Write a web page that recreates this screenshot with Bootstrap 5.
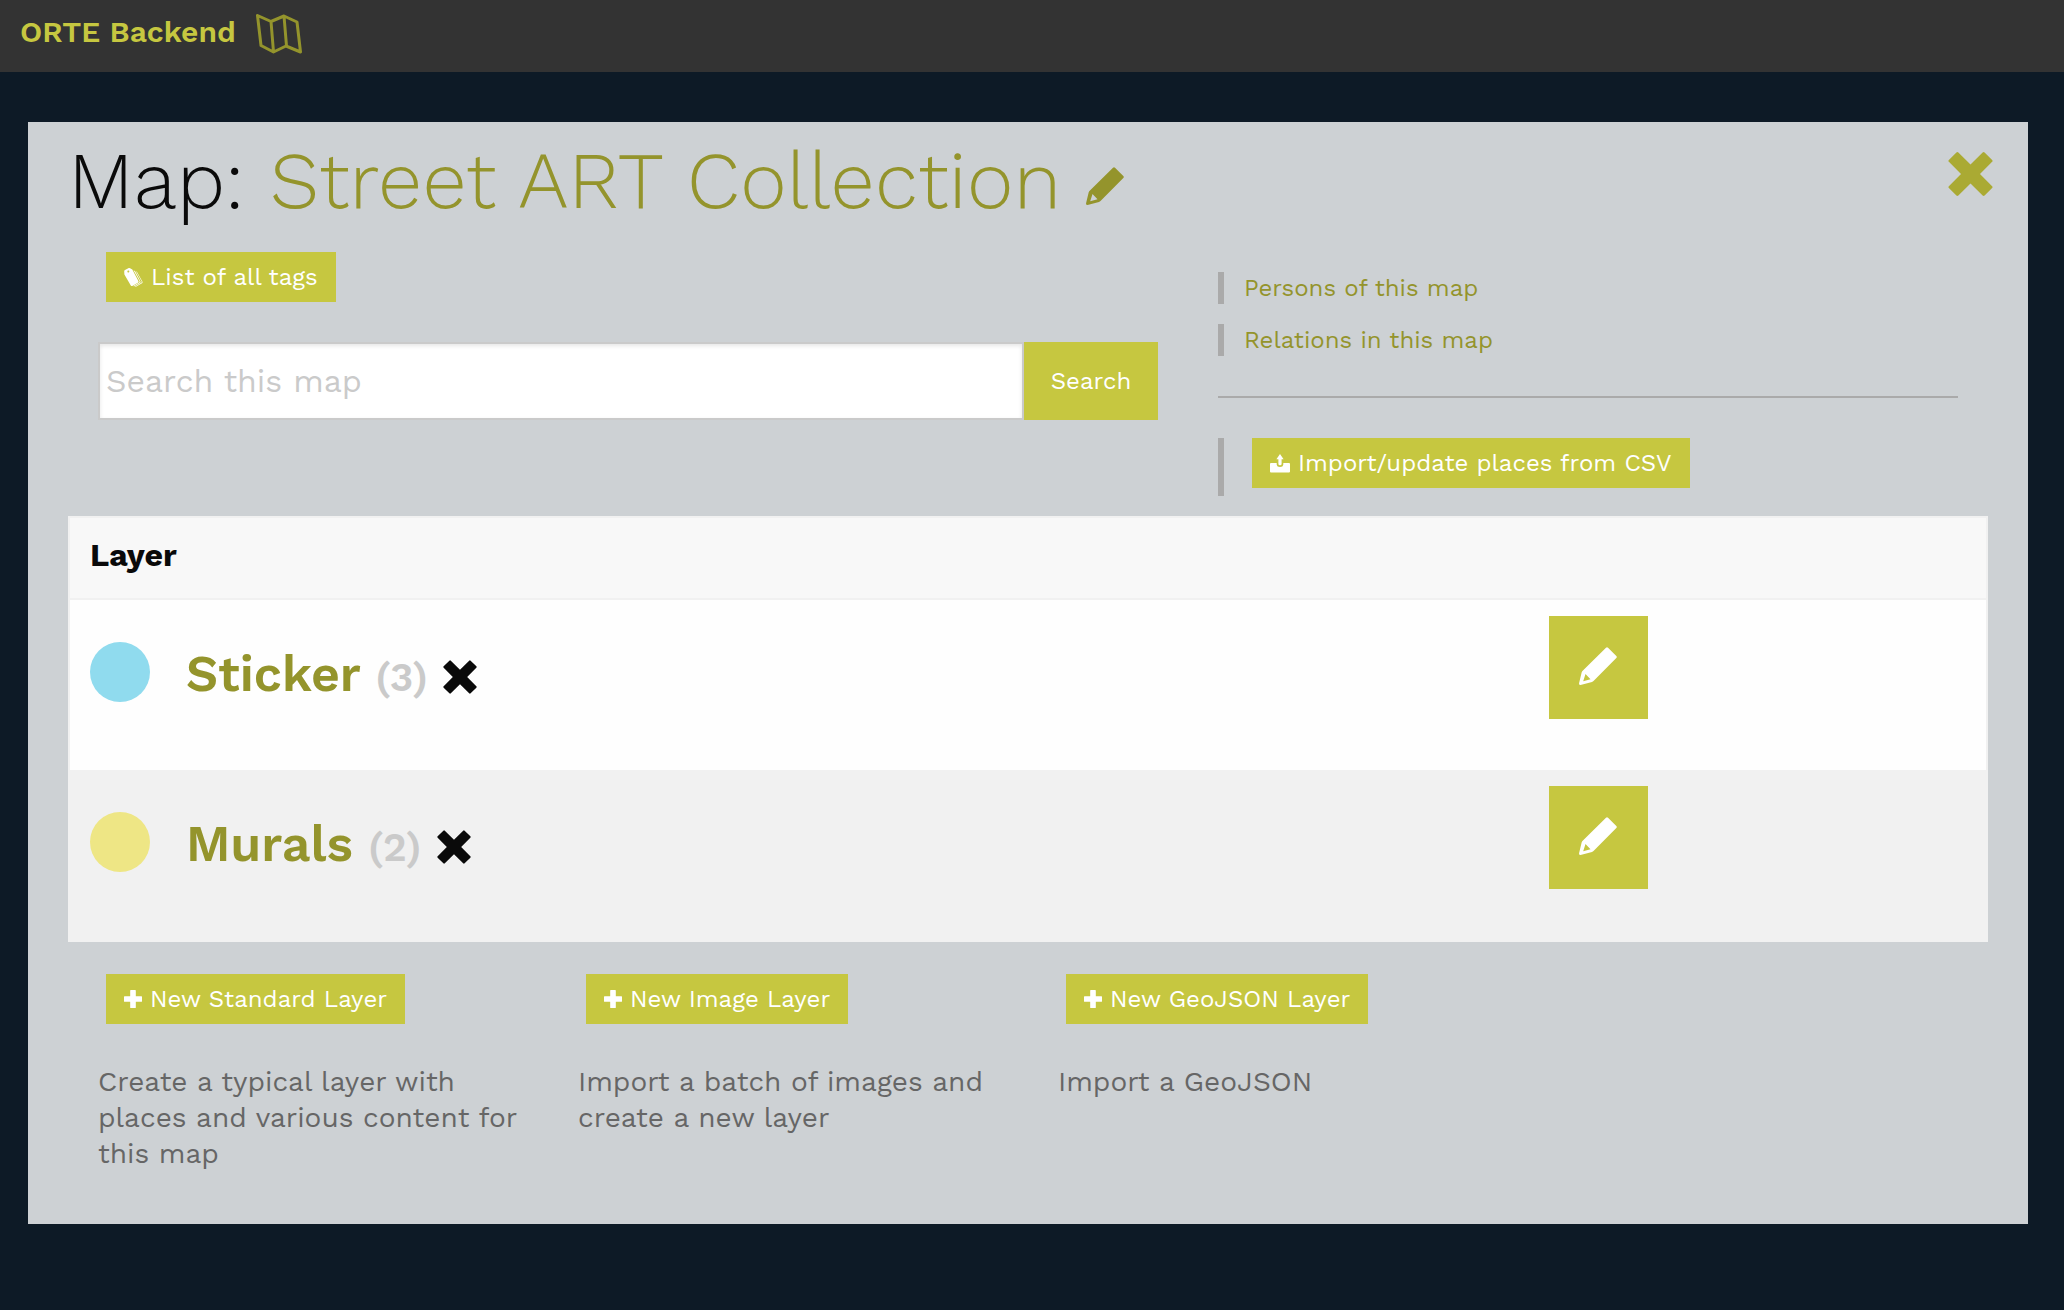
<!DOCTYPE html>
<html lang="en">
<head>
<meta charset="utf-8">
<meta name="viewport" content="width=device-width, initial-scale=1">
<title>ORTE Backend</title>
<link href="https://cdn.jsdelivr.net/npm/bootstrap@5.3.0/dist/css/bootstrap.min.css" rel="stylesheet">
<style>
  :root { --lime: #c6c740; --olive: #94942c; --ink: #0a0a0a; }
  body { background: #0d1a26; color: var(--ink); font-family: "Work Sans", Inter, "Liberation Sans", sans-serif; font-size: 24px; line-height: 32px; }
  a { color: var(--olive); text-decoration: none; }
  a:hover { color: #7d7d22; }
  svg { fill: currentColor; display: block; flex: none; }
  .topbar { background: #333; min-height: 72px; padding: 0 20px; }
  .topbar .navbar-brand { color: var(--lime); font-size: 30px; font-weight: 600; line-height: 32px; margin-right: 20px; padding: 0 0 8px; }
  .map-icon { fill: none; stroke: currentColor; stroke-width: 3; stroke-linejoin: round; }
  .panel { background: #cdd1d4; margin: 50px 36px 86px 28px; padding-bottom: 52px; }
  .panel-head { padding: 0 35px 12px 40px; }
  .panel-head h1 { font-size: 80px; font-weight: 300; line-height: 118px; margin: 0; }
  .panel-head h1 svg { display: inline-block; vertical-align: 3px; }
  .close-link { color: #aaaa33; margin-top: 29px; }
  .panel-body { padding: 0 40px; }
  .panel-body > .row { --bs-gutter-x: 60px; margin-left: 0; margin-right: 0; }
  .btn-lime { --bs-btn-color: #fff; --bs-btn-bg: var(--lime); --bs-btn-hover-color: #fff; --bs-btn-hover-bg: #aaaa33; --bs-btn-active-color: #fff; --bs-btn-active-bg: #94942c; --bs-btn-border-width: 0; --bs-btn-border-radius: 0; --bs-btn-font-size: 24px; --bs-btn-line-height: 26px; --bs-btn-padding-y: 12px; --bs-btn-padding-x: 18px; }
  .btn-tool { display: inline-flex; align-items: center; gap: 8px; margin-left: 8px; }
  .search-row { margin-top: 40px; }
  .search-row .form-control { border: 2px solid #cacaca; border-radius: 0; box-shadow: inset 0 2px 4px rgba(10,10,10,.1); font-size: 32px; height: 78px; padding: 0 6px; color: var(--ink); }
  .search-row .form-control::placeholder { color: #cacaca; opacity: 1; }
  .search-row .btn { flex: none; width: 134px; }
  .side { margin-top: 20px; margin-bottom: 20px; }
  .side-item { border-left: 6px solid #aaa; padding-left: 20px; }
  .side-item + .side-item { margin-top: 20px; }
  .side-item .btn { margin-bottom: 8px; }
  .side hr { border-top: 2px solid #aaa; opacity: 1; margin: 40px 0; }
  .layers { margin: 0; border: 2px solid #f1f1f1; border-collapse: separate; border-spacing: 0; --bs-table-bg: #fefefe; --bs-table-color: var(--ink); }
  .layers > :not(caption) > * > * { border: 0; padding: 0 20px; box-shadow: none; }
  .layers > thead > tr > th { background: #f8f8f8; border-bottom: 2px solid #f1f1f1; font-size: 32px; font-weight: 700; height: 82px; padding-bottom: 6px; vertical-align: middle; }
  .layers > tbody > tr > td { height: 170px; padding-top: 16px; vertical-align: top; }
  .layers > tbody > tr:nth-child(even) > td { background: #f1f1f1; }
  .col-edit { width: 457px; }
  .layer-line { gap: 36px; padding-top: 26px; }
  .dot { width: 60px; height: 60px; border-radius: 50%; }
  .dot-blue { background: #90dbee; }
  .dot-yellow { background: #eee685; }
  .layer-name { font-size: 50px; font-weight: 600; line-height: 64px; margin: 0; }
  .layer-name .tally { color: #cacaca; font-size: 40px; }
  .layer-name svg { display: inline-block; vertical-align: -3px; color: var(--ink); }
  .btn-edit { display: inline-flex; padding: 31px 31px 34px 30px; }
  .actions { margin-top: 32px; }
  .actions p { color: #666; font-size: 28px; line-height: 36px; margin: 40px 0 0; }
</style>
</head>
<body>
<svg class="d-none" aria-hidden="true">
  <symbol id="i-pencil" viewBox="0 0 38 38"><path fill-rule="evenodd" d="M3.2 24.3 27 .7q1-1 2 0l8.300 8.300q1 1 0 2L14.500 34 13 35 1.500 38Q0 38 0 36.500L2.700 25.200ZM6.500 27 4.200 34.200 11.500 32.200Z"/></symbol>
  <symbol id="i-cross" viewBox="0 0 46 46"><path d="M8.600.9q1-1 2 0L23 13.300 35.400.9q1-1 2 0l7.700 7.700q1 1 0 2L32.700 23l12.400 12.400q1 1 0 2l-7.700 7.700q-1 1-2 0L23 32.700 10.600 45.100q-1 1-2 0L.9 37.400q-1-1 0-2L13.300 23 .9 10.600q-1-1 0-2Z"/></symbol>
  <symbol id="i-plus" viewBox="0 0 18 18"><path d="M6.800 0h4.400q.6 0 .6.600v5.600h5.600q.6 0 .6.600v4.400q0 .6-.6.600h-5.600v5.600q0 .6-.6.600H6.800q-.6 0-.6-.6v-5.600H.6q-.6 0-.6-.6V6.800q0-.6.6-.6h5.600V.6q0-.6.600-.6Z"/></symbol>
  <symbol id="i-tags" viewBox="0 0 19 19"><path fill-rule="evenodd" d="M.2 3.400Q.2 2.500 1 2.100L4.800.1Q6 -.1 6.900.7L8.300 1.600 14.500 13.200Q14.700 14.200 13.900 14.800L8.300 18Q7.300 18.300 6.800 17.500L.4 6.500ZM4.600 2.500a1 1 0 1 0 .1 1.900 1 1 0 0 0-.1-1.900Z"/><path d="M9.500 2.200 11 3l5.500 10.400q.2 1-.6 1.500l-6 3.600-.3-.7 5.600-3.400q.7-.5.4-1.200Z M12 3.300l.9.500 5.600 10q.3 1-.5 1.500L11.500 19l-.4-.5 6.200-3.800q.7-.5.400-1.200Z"/></symbol>
  <symbol id="i-upload" viewBox="0 0 20 19"><path d="M10 0l3.600 5.200h-2V10q0 1.200-1.600 1.200T8.400 10V5.200h-2Z"/><path d="M1 9h5.700v1.500Q7 13 10 13t3.300-2.500V9H19q1 0 1 1v7.500q0 1-1 1H1q-1 0-1-1V10Q0 9 1 9Z"/></symbol>
</svg>

<nav class="navbar topbar justify-content-start">
  <a class="navbar-brand" href="#">ORTE Backend</a>
  <a class="pb-1" href="#" aria-label="Maps">
    <svg class="map-icon" width="46" height="40" viewBox="0 0 46 40"><path d="M1.500 1.500 15 7.500 28 2 41 8 44.500 38 30 32 17.500 38 5 31.500ZM15 7.500 17.500 38M28 2 30.500 32"/></svg>
  </a>
</nav>

<main class="panel">
  <header class="panel-head d-flex justify-content-between align-items-start">
    <h1>Map: <a href="#">Street ART Collection <svg width="38" height="38" role="img" aria-label="Edit map"><use href="#i-pencil"/></svg></a></h1>
    <a class="close-link" href="#" aria-label="Close"><svg width="45" height="46"><use href="#i-cross"/></svg></a>
  </header>

  <div class="panel-body">
    <div class="row">
      <div class="col-7">
        <a class="btn btn-lime btn-tool" href="#"><svg width="19" height="19"><use href="#i-tags"/></svg>List of all tags</a>
        <form class="search-row d-flex" role="search">
          <input class="form-control" type="search" placeholder="Search this map" aria-label="Search this map">
          <button class="btn btn-lime" type="submit">Search</button>
        </form>
      </div>
      <div class="col-5">
        <div class="side">
          <div class="side-item"><a href="#">Persons of this map</a></div>
          <div class="side-item"><a href="#">Relations in this map</a></div>
          <hr>
          <div class="side-item"><a class="btn btn-lime btn-tool" href="#"><svg width="20" height="19"><use href="#i-upload"/></svg>Import/update places from CSV</a></div>
        </div>
      </div>
    </div>

    <table class="table layers">
      <thead>
        <tr><th scope="col">Layer</th><th class="col-edit"></th></tr>
      </thead>
      <tbody>
        <tr>
          <td>
            <div class="layer-line d-flex">
              <span class="dot dot-blue"></span>
              <h2 class="layer-name"><a href="#">Sticker</a> <span class="tally">(3)</span> <svg width="34" height="34" role="img" aria-label="Not published"><use href="#i-cross"/></svg></h2>
            </div>
          </td>
          <td><a class="btn btn-lime btn-edit" href="#" aria-label="Edit Sticker"><svg width="38" height="38"><use href="#i-pencil"/></svg></a></td>
        </tr>
        <tr>
          <td>
            <div class="layer-line d-flex">
              <span class="dot dot-yellow"></span>
              <h2 class="layer-name"><a href="#">Murals</a> <span class="tally">(2)</span> <svg width="34" height="34" role="img" aria-label="Not published"><use href="#i-cross"/></svg></h2>
            </div>
          </td>
          <td><a class="btn btn-lime btn-edit" href="#" aria-label="Edit Murals"><svg width="38" height="38"><use href="#i-pencil"/></svg></a></td>
        </tr>
      </tbody>
    </table>

    <div class="row actions">
      <div class="col-3">
        <a class="btn btn-lime btn-tool" href="#"><svg width="18" height="18"><use href="#i-plus"/></svg>New Standard Layer</a>
        <p>Create a typical layer with places and various content for this map</p>
      </div>
      <div class="col-3">
        <a class="btn btn-lime btn-tool" href="#"><svg width="18" height="18"><use href="#i-plus"/></svg>New Image Layer</a>
        <p>Import a batch of images and create a new layer</p>
      </div>
      <div class="col-3">
        <a class="btn btn-lime btn-tool" href="#"><svg width="18" height="18"><use href="#i-plus"/></svg>New GeoJSON Layer</a>
        <p>Import a GeoJSON</p>
      </div>
    </div>
  </div>
</main>
<script src="https://cdn.jsdelivr.net/npm/bootstrap@5.3.0/dist/js/bootstrap.bundle.min.js"></script>
</body>
</html>
